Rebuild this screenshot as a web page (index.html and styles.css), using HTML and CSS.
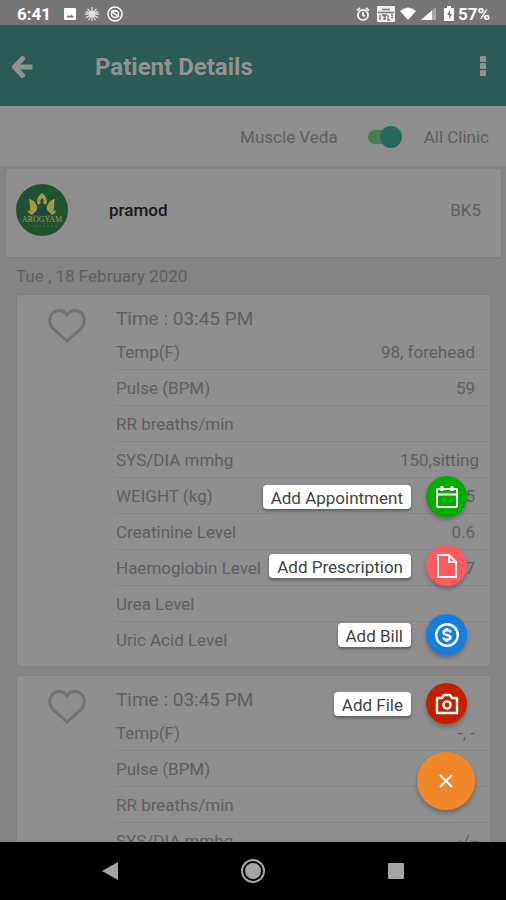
FILE: index.html
```html
<!DOCTYPE html>
<html lang="en">
<head>
    <meta charset="UTF-8">
    <meta name="viewport" content="width=device-width, initial-scale=1.0">
    <title>Patient Details</title>
    <link rel="stylesheet" href="styles.css">
</head>
<body>
    <!-- Status Bar -->
    <div class="status-bar">
        <div class="status-left">
            <span class="clock">6:41</span>
            <svg width="14" height="14" viewBox="0 0 14 14"><path fill="#fff" fill-rule="evenodd" d="M2 1h10q1 0 1 1v10q0 1-1 1H2q-1 0-1-1V2q0-1 1-1zM3 10.500h8L8.500 7.500 7 9.500 5.500 8z"/></svg>
            <svg width="16" height="16" viewBox="0 0 18 18" fill="none" stroke="#ddd" stroke-width="1.500"><path d="M9 1v16M2 6l14 7M16 6L2 13M4 3l3 4M14 3l-3 4M5 16l3-5M13 16l-3-5M1 9h4M13 9h4"/><circle cx="9" cy="9" r="3" fill="#ddd"/></svg>
            <svg width="16" height="16" viewBox="0 0 16 16" fill="none" stroke="#fff" stroke-width="1.500"><circle cx="8" cy="8" r="7"/><circle cx="8" cy="8" r="3.500"/><path d="M4 5l8 6M5 5h5"/></svg>
        </div>
        <div class="status-right">
            <svg class="alarm" width="14" height="14" viewBox="0 0 14 14" fill="none" stroke="#eee" stroke-width="2"><circle cx="7" cy="8" r="5"/><path d="M7 5v3l2 1.500M1 3.500L4 1M13 3.500L10 1"/></svg>
            <svg class="volte" width="18" height="16" viewBox="0 0 18 16"><rect width="18" height="16" rx="1" fill="#eee"/><path stroke="#777" stroke-width="1.300" fill="none" d="M5 3.500h8M1 6.500h16M3 14V9M5 9h2v2M8 14V9h2M11 9v5h2M14 9h2M14 11.500h2M7 12v2"/></svg>
            <svg width="16" height="14" viewBox="0 0 16 14"><path fill="#fff" d="M0 4Q8-3 16 4L8 13z"/></svg>
            <svg class="signal" width="15" height="14" viewBox="0 0 15 14"><path fill="#a5a5a5" d="M15 0v13H0z"/><path fill="#fff" d="M11 3.500V13H0z"/></svg>
            <svg class="battery" width="10" height="15" viewBox="0 0 10 15"><path fill="#fff" d="M3 0h4v2h2q1 0 1 1v11q0 1-1 1H1q-1 0-1-1V3q0-1 1-1h2z"/><path fill="#777" d="M6 4L3 9h2v4l3-5H6z"/></svg>
            <span class="percent">57%</span>
        </div>
    </div>

    <!-- Header -->
    <header class="header">
        <button class="icon-btn" aria-label="Back">
            <svg width="22" height="24" viewBox="0 0 22 24" fill="none" stroke="currentColor" stroke-width="5"><path stroke-linecap="round" stroke-linejoin="round" d="M11.500 3.500L3.500 12l8 8.500"/><path d="M4 12h17.500"/></svg>
        </button>
        <h1>Patient Details</h1>
        <button class="icon-btn" aria-label="More options">
            <svg width="6" height="22" viewBox="0 0 6 22" fill="currentColor"><rect width="6" height="6" rx="1"/><rect y="7" width="6" height="6" rx="1"/><rect y="14" width="6" height="6" rx="1"/></svg>
        </button>
    </header>

    <main class="content">
        <!-- Clinic Switch -->
        <div class="clinic-switch">
            <label for="all-clinic">Muscle Veda</label>
            <input type="checkbox" id="all-clinic" class="switch" checked>
            <label for="all-clinic">All Clinic</label>
        </div>

        <!-- Patient Card -->
        <section class="patient-card">
            <svg class="avatar" width="52" height="52" viewBox="0 0 52 52">
                <circle cx="26" cy="26" r="26" fill="#215332"/>
                <g fill="#a3984a">
                    <path d="M26 9c3 2 5 5 5 9l-3 6h-4l-3-6c0-4 2-7 5-9z"/>
                    <path d="M13 15c6 1 9 6 10 16-6 0-9-3-9-6 0-4 0-6-1-10zM39 15c-6 1-9 6-10 16 6 0 9-3 9-6 0-4 0-6 1-10z"/>
                    <path d="M12 26c0 4 4 6 10 5zM40 26c0 4-4 6-10 5z"/>
                </g>
                <path fill="#1d4b42" d="M26 14l2 3-1 2 3 2 1 5 5 5H16l5-5 1-5 3-2-1-2z"/>
                <text x="26" y="38" text-anchor="middle" class="avatar-name">AROGYAM</text>
                <path stroke="#4f6b3c" stroke-dasharray="2 2" d="M19 42h22"/>
            </svg>
            <h2>pramod</h2>
            <span>BK5</span>
        </section>

        <h3 class="date">Tue , 18 February 2020</h3>

        <!-- Vitals -->
        <section class="vitals-card">
            <button class="like-btn" aria-label="Favourite">
                <svg width="38" height="34" viewBox="0 0 38 34" fill="none" stroke="currentColor" stroke-width="3"><path d="M19 32L4.500 19C-1 12 2 2 11 1.500c4 0 6.500 2 8 4.500 1.500-2.500 4-4.500 8-4.500 9 .5 12 10.500 6.500 17.500z"/></svg>
            </button>
            <div class="vitals">
                <h4>Time : 03:45 PM</h4>
                <table>
                    <tr><th>Temp(F)</th><td>98, forehead</td></tr>
                    <tr><th>Pulse (BPM)</th><td>59</td></tr>
                    <tr><th>RR breaths/min</th><td></td></tr>
                    <tr><th>SYS/DIA mmhg</th><td class="wide">150,sitting</td></tr>
                    <tr><th>WEIGHT (kg)</th><td>65</td></tr>
                    <tr><th>Creatinine Level</th><td>0.6</td></tr>
                    <tr><th>Haemoglobin Level</th><td>7</td></tr>
                    <tr><th>Urea Level</th><td></td></tr>
                    <tr><th>Uric Acid Level</th><td></td></tr>
                </table>
            </div>
        </section>

        <section class="vitals-card">
            <button class="like-btn" aria-label="Favourite">
                <svg width="38" height="34" viewBox="0 0 38 34" fill="none" stroke="currentColor" stroke-width="3"><path d="M19 32L4.500 19C-1 12 2 2 11 1.500c4 0 6.500 2 8 4.500 1.500-2.500 4-4.500 8-4.500 9 .5 12 10.500 6.500 17.500z"/></svg>
            </button>
            <div class="vitals">
                <h4>Time : 03:45 PM</h4>
                <table>
                    <tr><th>Temp(F)</th><td>-, -</td></tr>
                    <tr><th>Pulse (BPM)</th><td></td></tr>
                    <tr><th>RR breaths/min</th><td></td></tr>
                    <tr><th>SYS/DIA mmhg</th><td class="wide">-/--</td></tr>
                </table>
            </div>
        </section>

        <!-- Floating Menu -->
        <div class="fab-menu">
            <button class="fab-item">
                <span class="fab-label">Add Appointment</span>
                <span class="fab-icon green">
                    <svg width="24" height="24" viewBox="0 0 24 24" fill="none" stroke="#fff" stroke-width="2"><rect x="2" y="4" width="20" height="18" rx="1"/><path d="M2 9.500h20"/><path stroke-width="3" d="M7 1v5M17 1v5"/></svg>
                </span>
            </button>
            <button class="fab-item">
                <span class="fab-label">Add Prescription</span>
                <span class="fab-icon pink">
                    <svg width="24" height="26" viewBox="0 0 24 26" fill="none" stroke="#fff" stroke-width="2"><path d="M3 2h11l7 7v15H3z"/><path d="M14 2v7h7"/></svg>
                </span>
            </button>
            <button class="fab-item">
                <span class="fab-label">Add Bill</span>
                <span class="fab-icon blue">
                    <svg width="24" height="24" viewBox="0 0 24 24" fill="none" stroke="#fff" stroke-width="2.400"><circle cx="12" cy="12" r="10.800"/><path d="M15.500 9.500c0-3-7-3-7 0s7 2 7 5-7 3-7 0M12 5v2M12 17v2"/></svg>
                </span>
            </button>
            <button class="fab-item">
                <span class="fab-label">Add File</span>
                <span class="fab-icon red">
                    <svg width="24" height="22" viewBox="0 0 24 22" fill="none" stroke="#fff" stroke-width="2.400"><path stroke-linejoin="round" d="M2 5h5l2-3h6l2 3h5v15H2z"/><circle cx="12" cy="12" r="3.600"/></svg>
                </span>
            </button>
            <button class="fab-close" aria-label="Close menu">
                <svg width="14" height="14" viewBox="0 0 14 14" stroke="#fff" stroke-width="2"><path d="M1 1l12 12M13 1L1 13"/></svg>
            </button>
        </div>
    </main>

    <!-- Navigation Bar -->
    <nav class="nav-bar">
        <button aria-label="Back"><svg width="16" height="18" viewBox="0 0 16 18"><path fill="#a5a5a5" d="M16 0v18L0 9z"/></svg></button>
        <button aria-label="Home"><svg width="24" height="24" viewBox="0 0 24 24"><circle cx="12" cy="12" r="11" fill="none" stroke="#a5a5a5" stroke-width="2"/><circle cx="12" cy="12" r="8" fill="#a5a5a5"/></svg></button>
        <button aria-label="Recent apps"><svg width="16" height="16" viewBox="0 0 16 16"><rect width="16" height="16" rx="1" fill="#a5a5a5"/></svg></button>
    </nav>
</body>
</html>
```
FILE: styles.css
```css
* {
    box-sizing: border-box;
    margin: 0;
    padding: 0;
}

body {
    font-family: Roboto, sans-serif;
    font-size: 17px;
    color: #606060;
    background: #848484;
    height: 100vh;
    display: flex;
    flex-direction: column;
    overflow: hidden;
}

button {
    font: inherit;
    color: inherit;
    background: none;
    border: none;
    cursor: pointer;
}

svg {
    display: block;
    flex-shrink: 0;
}

/* Status Bar */
.status-bar {
    display: flex;
    justify-content: space-between;
    align-items: center;
    height: 25px;
    padding: 2px 16px 0 17px;
    background: #757575;
    color: #fff;
    font-weight: 700;
}

.status-left,
.status-right {
    display: flex;
    align-items: center;
}

.status-left {
    gap: 7px;
}

.clock {
    margin-right: 5px;
}

.status-right {
    gap: 5px;
}

.alarm {
    margin-right: 2px;
}

.signal {
    margin-right: 3px;
}

.battery {
    margin-right: -1px;
}

/* Header */
.header {
    display: flex;
    align-items: center;
    height: 81px;
    padding: 3px 20px 0 11px;
    background: #2a5b55;
    color: #929292;
    flex-shrink: 0;
}

.header h1 {
    flex: 1;
    padding-left: 62px;
    font-size: 24px;
    font-weight: 700;
}

/* Content */
.content {
    position: relative;
    flex: 1;
    min-height: 0;
    overflow: hidden;
}

.clinic-switch {
    display: flex;
    justify-content: flex-end;
    align-items: center;
    height: 61px;
    padding: 2px 17px 0 0;
    background: #8e8e8e;
    border-bottom: 1px solid #848484;
}

/* Toggle */
.switch {
    appearance: none;
    position: relative;
    width: 34px;
    height: 22px;
    margin: 0 22px 0 30px;
    cursor: pointer;
}

.switch::before {
    content: "";
    position: absolute;
    inset: 4px 2px 4px 0;
    border-radius: 8px;
    background: #44824a;
}

.switch::after {
    content: "";
    position: absolute;
    top: 0;
    left: 0;
    width: 22px;
    height: 22px;
    border-radius: 50%;
    background: #26685f;
}

.switch:checked::after {
    left: auto;
    right: 0;
}

/* Patient Card */
.patient-card {
    display: flex;
    align-items: center;
    height: 88px;
    margin: 2px 5px 0 6px;
    padding: 0 20px 6px 10px;
    background: #8e8e8e;
    border-radius: 2px;
    box-shadow: 0 1px 2px rgba(0, 0, 0, 0.1);
}

.patient-card h2 {
    flex: 1;
    padding-left: 41px;
    font-size: 17px;
    font-weight: 500;
    color: #1a1a1a;
}

.avatar-name {
    font-family: "Liberation Serif", serif;
    font-size: 8px;
    fill: #a3984a;
}

.date {
    padding-left: 16px;
    font-size: 17px;
    font-weight: 400;
    line-height: 38px;
}

/* Vitals */
.vitals-card {
    display: flex;
    margin: 0 16px 10px 17px;
    padding-bottom: 9px;
    background: #8e8e8e;
    border-radius: 3px;
    box-shadow: 0 0 2px rgba(0, 0, 0, 0.1);
}

.like-btn {
    align-self: flex-start;
    padding: 14px 30px 0 31px;
    color: #727272;
}

.vitals {
    flex: 1;
}

.vitals h4 {
    height: 38px;
    font-size: 19px;
    font-weight: 400;
    line-height: 47px;
}

.vitals table {
    width: 100%;
    border-collapse: collapse;
}

.vitals th,
.vitals td {
    height: 36px;
    padding-top: 2px;
    font-weight: 400;
    border-bottom: 1px solid #848484;
}

.vitals th {
    text-align: left;
}

.vitals td {
    padding-right: 15px;
    text-align: right;
}

.vitals td.wide {
    padding-right: 11px;
}

.vitals tr:last-child th,
.vitals tr:last-child td {
    border-bottom: none;
}

/* Floating Menu */
.fab-menu {
    position: absolute;
    right: 31px;
    bottom: 32px;
    display: flex;
    flex-direction: column;
    align-items: flex-end;
    gap: 28px;
}

.fab-item {
    display: flex;
    align-items: center;
    gap: 15px;
    padding-right: 8px;
}

.fab-label {
    height: 24px;
    padding: 0 8px;
    line-height: 27px;
    color: #444;
    background: #fff;
    border-radius: 4px;
    box-shadow: 0 2px 3px rgba(0, 0, 0, 0.35);
}

.fab-icon,
.fab-close {
    display: flex;
    justify-content: center;
    align-items: center;
    border-radius: 50%;
    box-shadow: 0 3px 4px rgba(0, 0, 0, 0.25);
}

.fab-icon {
    width: 41px;
    height: 41px;
}

.fab-close {
    width: 58px;
    height: 58px;
    background: #f28729;
}

.green {
    background: #00ad00;
}

.pink {
    background: #ff5b5e;
}

.blue {
    background: #157fe0;
}

.red {
    background: #c41f00;
}

/* Navigation Bar */
.nav-bar {
    display: flex;
    justify-content: space-around;
    align-items: center;
    height: 58px;
    padding: 0 40px;
    background: #000;
    flex-shrink: 0;
}
```
